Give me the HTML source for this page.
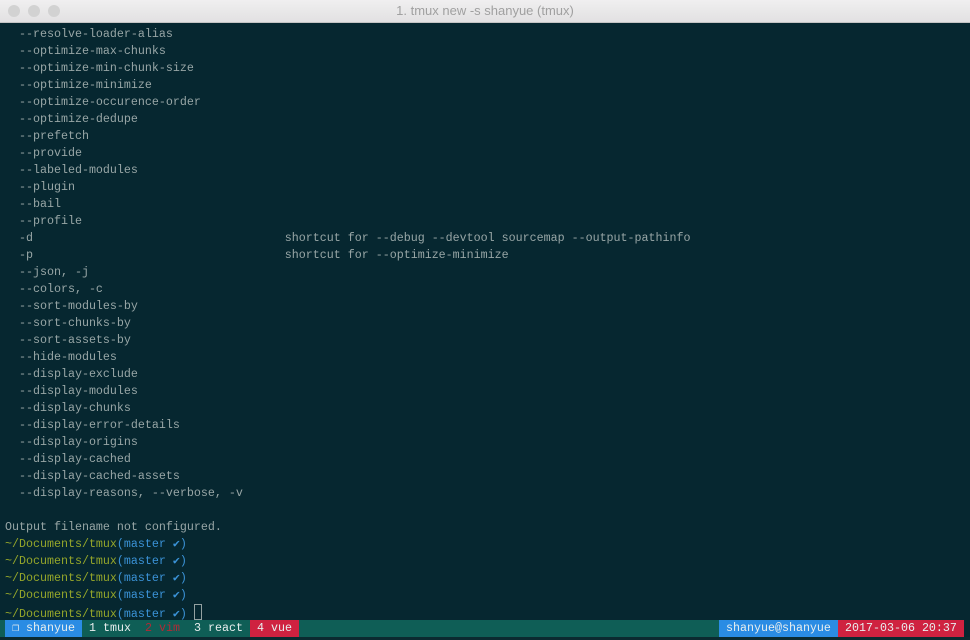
<!DOCTYPE html>
<html><head><style>
body{margin:0;width:970px;height:640px;background:#062730;overflow:hidden;position:relative;font-family:"Liberation Mono",monospace;}
.tb{position:absolute;left:0;top:0;width:970px;height:22px;background:linear-gradient(#f0eff0,#e2e1e2);border-bottom:1px solid #c4c4c4;font-family:"Liberation Sans",sans-serif;font-size:13px;color:#a0a0a0;text-align:center;line-height:22px;}
.dot{position:absolute;top:5px;width:12px;height:12px;border-radius:50%;background:#d2d2d2;}
pre{position:absolute;left:5px;top:26px;margin:0;font-family:"Liberation Mono",monospace;font-size:11.67px;line-height:17px;color:#98a6a6;}
.g{color:#95a62a}.b{color:#3b93d8}
.cur{display:inline-block;width:6px;height:14px;border:1px solid #93a1a1;vertical-align:-3px;}
.sb{position:absolute;left:0;top:620px;width:964px;height:17px;background:#0f5e56;font-size:11.67px;line-height:17px;color:#e8eeee;white-space:pre;}
.sb span{position:absolute;top:0;height:17px;}
.bot{position:absolute;left:0;top:637px;width:970px;height:3px;background:#0b2a30;}
</style></head><body>
<div class="tb"><div class="dot" style="left:8px"></div><div class="dot" style="left:28px"></div><div class="dot" style="left:48px"></div>1. tmux new -s shanyue (tmux)</div>
<pre>  --resolve-loader-alias
  --optimize-max-chunks
  --optimize-min-chunk-size
  --optimize-minimize
  --optimize-occurence-order
  --optimize-dedupe
  --prefetch
  --provide
  --labeled-modules
  --plugin
  --bail
  --profile
  -d                                    shortcut for --debug --devtool sourcemap --output-pathinfo
  -p                                    shortcut for --optimize-minimize
  --json, -j
  --colors, -c
  --sort-modules-by
  --sort-chunks-by
  --sort-assets-by
  --hide-modules
  --display-exclude
  --display-modules
  --display-chunks
  --display-error-details
  --display-origins
  --display-cached
  --display-cached-assets
  --display-reasons, --verbose, -v

Output filename not configured.
<span class="g">~/Documents/tmux</span><span class="b">(master ✔)</span>
<span class="g">~/Documents/tmux</span><span class="b">(master ✔)</span>
<span class="g">~/Documents/tmux</span><span class="b">(master ✔)</span>
<span class="g">~/Documents/tmux</span><span class="b">(master ✔)</span>
<span class="g">~/Documents/tmux</span><span class="b">(master ✔)</span> <span class="cur"></span></pre>
<div class="sb">
<span style="left:5px;width:77px;background:#2a8ce4;"> ❐ shanyue</span>
<span style="left:89px;">1 tmux</span>
<span style="left:145px;color:#b02a35;">2 vim</span>
<span style="left:194px;">3 react</span>
<span style="left:250px;width:49px;background:#cf2240;"> 4 vue</span>
<span style="left:719px;width:119px;background:#2a8ce4;"> shanyue@shanyue</span>
<span style="left:838px;width:126px;background:#cf2240;"> 2017-03-06 20:37</span>
</div>
<div class="bot"></div>
</body></html>
